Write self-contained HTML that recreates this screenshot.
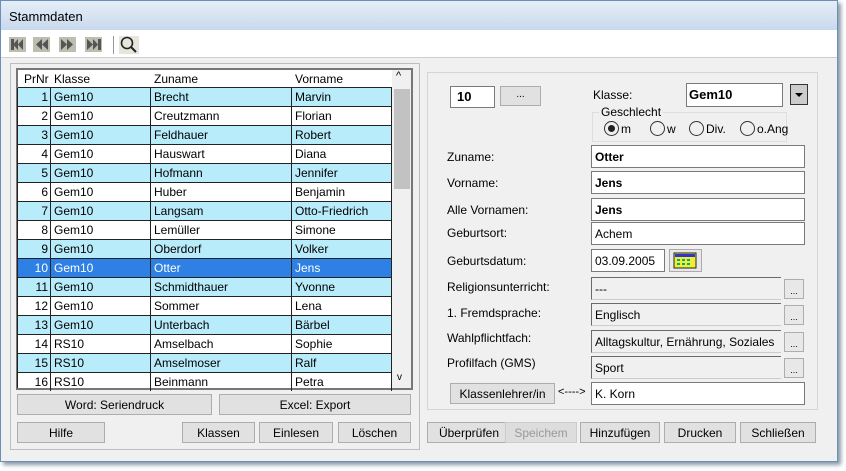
<!DOCTYPE html><html><head><meta charset="utf-8"><style>
*{box-sizing:border-box;margin:0;padding:0}
body{width:846px;height:471px;background:#fff;font-family:"Liberation Sans",sans-serif;font-size:12px;color:#000;position:relative;overflow:hidden}
.a{position:absolute}
.win{left:0;top:0;width:838px;height:462px;background:#f0f0f0;border:1px solid #6b8fb5;box-shadow:3px 3px 4px #8a9aa8}
.title{left:0;top:0;width:836px;height:29px;background:linear-gradient(#e6eef8,#c9d9ec);font-size:13px;padding:8px 0 0 8px}
.tb{left:0;top:29px;width:836px;height:28px;background:#fff;border-bottom:1px solid #cfcfcf}
.btn{position:absolute;background:#e1e1e1;border:1px solid #adadad;text-align:center;line-height:20px}
.row{position:absolute;left:17px;width:375px;height:19px;border-bottom:1px solid #222;border-left:1px solid #222}
.row div{position:absolute;top:0;height:18px;line-height:18px;border-right:1px solid #222;padding-left:3px;white-space:nowrap}
.c0{left:0;width:33px;text-align:right;padding-right:2px}
.c1{left:33px;width:100px}.c2{left:133px;width:141px}.c3{left:274px;width:100px}
.lbl{position:absolute;left:447px}
.fld{position:absolute;left:591px;width:214px;height:23px;background:#fff;border:1px solid #7a7a7a;padding:4px 3px;font-weight:bold}
.gf{position:absolute;left:591px;width:190px;height:23px;background:#f0f0f0;border:1px solid #6a6a6a;border-right:none;border-bottom-color:#ccc;padding:4px 3px}
.db{position:absolute;left:784px;width:20px;height:20px;background:#e8e8e8;border:1px solid #adadad;font-size:9px;text-align:center;line-height:22px}
.rb{display:inline-block;width:15px;height:15px;border:1px solid #333;border-radius:50%;vertical-align:-3px;margin-right:2px;position:relative}
</style></head><body>
<div class="a win">
<div class="a title">Stammdaten</div>
<div class="a tb">
<svg class="a" style="left:8px;top:6px" width="140" height="18">
<g fill="#bdbdb0"><rect x="0" y="1" width="17" height="15"/><rect x="24" y="1" width="17" height="15"/><rect x="50" y="1" width="17" height="15"/><rect x="76" y="1" width="17" height="15"/><rect x="110" y="0" width="20" height="18" fill="#e6e6dc"/></g>
<g fill="#555"><rect x="2" y="3" width="3" height="11"/><path d="M4 8.5l5-5.5v11z M9 8.5l5-5.5v11z"/>
<path d="M27 8.5l6-5.5v11z M33 8.5l6-5.5v11z"/>
<path d="M58 3l6 5.5-6 5.5z M52 3l6 5.5-6 5.5z"/>
<path d="M78 3l6 5.5-6 5.5z M84 3l5 5.5-5 5.5z"/><rect x="89" y="3" width="3" height="11"/></g>
<rect x="104" y="0" width="1" height="18" fill="#999"/>
<circle cx="118" cy="7" r="5.5" fill="none" stroke="#222" stroke-width="1.6"/><path d="M122 11l5 5" stroke="#222" stroke-width="2"/>
</svg></div>
<div class="a" style="left:9px;top:62px;width:410px;height:387px;border:1px solid #bdbdbd"></div>
</div>
<!-- grid -->
<div class="a" style="left:16px;top:68px;width:397px;height:322px;background:#fff;border:2px solid #777"></div>
<div class="a" style="left:18px;top:70px;width:374px;height:18px;background:#fff;border-bottom:1px solid #222">
<span class="a" style="left:6px;top:2px">PrNr</span><span class="a" style="left:36px;top:2px">Klasse</span><span class="a" style="left:136px;top:2px">Zuname</span><span class="a" style="left:277px;top:2px">Vorname</span></div>
<div class="a" style="left:392px;top:70px;width:19px;height:318px;background:#f0f0f0"></div>
<div class="a" style="left:396px;top:70px;font-size:11px">^</div>
<div class="a" style="left:394px;top:89px;width:16px;height:100px;background:#c2c2c2"></div>
<div class="a" style="left:397px;top:372px;font-size:10px">v</div>
<div id="g"></div>
<div class="btn" style="left:17px;top:394px;width:195px;height:21px">Word: Seriendruck</div>
<div class="btn" style="left:219px;top:394px;width:192px;height:21px">Excel: Export</div>
<div class="btn" style="left:17px;top:422px;width:88px;height:21px">Hilfe</div>
<div class="btn" style="left:182px;top:422px;width:73px;height:21px">Klassen</div>
<div class="btn" style="left:259px;top:422px;width:74px;height:21px">Einlesen</div>
<div class="btn" style="left:338px;top:422px;width:73px;height:21px">Löschen</div>
<div class="btn" style="left:427px;top:422px;width:84px;height:21px">Überprüfen</div>
<div class="btn" style="left:505px;top:422px;width:72px;height:21px;color:#999;background:#ddd;border-color:#ccc">Speichem</div>
<div class="btn" style="left:580px;top:422px;width:80px;height:21px">Hinzufügen</div>
<div class="btn" style="left:664px;top:422px;width:72px;height:21px">Drucken</div>
<div class="btn" style="left:740px;top:422px;width:76px;height:21px">Schließen</div>
<!-- right panel -->
<div class="a" style="left:427px;top:72px;width:391px;height:338px;border:1px solid #d5d5d5"></div>
<div class="a" style="left:450px;top:86px;width:45px;height:22px;background:#fff;border:1px solid #7a7a7a;font-weight:bold;font-size:13px;padding:2px 6px">10</div>
<div class="btn" style="left:500px;top:86px;width:41px;height:20px;line-height:16px;font-size:10px">...</div>
<div class="a" style="left:593px;top:88px">Klasse:</div>
<div class="a" style="left:686px;top:83px;width:97px;height:24px;background:#fff;border:1px solid #7a7a7a;font-weight:bold;font-size:13px;padding:3px 2px">Gem10</div>
<div class="a" style="left:790px;top:84px;width:18px;height:21px;background:#ccc;border:1px solid #333"><svg width="16" height="19"><path d="M4 8h8l-4 4z"/></svg></div>
<div class="a" style="left:592px;top:112px;width:195px;height:30px;border:1px solid #ddd"></div>
<div class="a" style="left:599px;top:105px;background:#f0f0f0;padding:0 2px">Geschlecht</div>
<div class="a" style="left:604px;top:121px"><span class="rb"><span class="a" style="left:3px;top:3px;width:7px;height:7px;background:#222;border-radius:50%"></span></span>m</div>
<div class="a" style="left:650px;top:121px"><span class="rb"></span>w</div>
<div class="a" style="left:689px;top:121px"><span class="rb"></span>Div.</div>
<div class="a" style="left:740px;top:121px"><span class="rb"></span>o.Ang</div>
<div class="lbl" style="top:150px">Zuname:</div><div class="fld" style="top:145px">Otter</div>
<div class="lbl" style="top:176px">Vorname:</div><div class="fld" style="top:171px">Jens</div>
<div class="lbl" style="top:203px">Alle Vornamen:</div><div class="fld" style="top:198px">Jens</div>
<div class="lbl" style="top:226px">Geburtsort:</div><div class="fld" style="top:222px;font-weight:normal">Achem</div>
<div class="lbl" style="top:254px">Geburtsdatum:</div><div class="fld" style="top:249px;width:74px;font-weight:normal">03.09.2005</div>
<div class="a" style="left:669px;top:249px;width:33px;height:23px;border:1px solid #aaa;background:#e8e8e8"><svg width="30" height="20"><rect x="4" y="3" width="22" height="15" fill="#ee3" stroke="#222"/><rect x="5" y="4" width="20" height="3" fill="#33c"/><g fill="#0a8"><rect x="7" y="9" width="3" height="2"/><rect x="12" y="9" width="3" height="2"/><rect x="17" y="9" width="3" height="2"/><rect x="7" y="13" width="3" height="2"/><rect x="12" y="13" width="3" height="2"/><rect x="17" y="13" width="3" height="2"/></g></svg></div>
<div class="lbl" style="top:280px">Religionsunterricht:</div><div class="gf" style="top:277px">---</div><div class="db" style="top:279px">...</div>
<div class="lbl" style="top:306px">1. Fremdsprache:</div><div class="gf" style="top:303px">Englisch</div><div class="db" style="top:305px">...</div>
<div class="lbl" style="top:331px">Wahlpflichtfach:</div><div class="gf" style="top:330px">Alltagskultur, Ernährung, Soziales</div><div class="db" style="top:332px">...</div>
<div class="lbl" style="top:356px">Profilfach (GMS)</div><div class="gf" style="top:356px">Sport</div><div class="db" style="top:358px">...</div>
<div class="btn" style="left:450px;top:383px;width:105px;height:21px">Klassenlehrer/in</div>
<div class="a" style="left:558px;top:386px;font-size:11px">&lt;----&gt;</div>
<div class="fld" style="top:382px;width:214px;font-weight:normal">K. Korn</div>
<script>
var d=[["Gem10","Brecht","Marvin"],["Gem10","Creutzmann","Florian"],["Gem10","Feldhauer","Robert"],["Gem10","Hauswart","Diana"],["Gem10","Hofmann","Jennifer"],["Gem10","Huber","Benjamin"],["Gem10","Langsam","Otto-Friedrich"],["Gem10","Lemüller","Simone"],["Gem10","Oberdorf","Volker"],["Gem10","Otter","Jens"],["Gem10","Schmidthauer","Yvonne"],["Gem10","Sommer","Lena"],["Gem10","Unterbach","Bärbel"],["RS10","Amselbach","Sophie"],["RS10","Amselmoser","Ralf"],["RS10","Beinmann","Petra"]];
var h="";d.forEach(function(r,i){var t=88+i*19;var bg=i==9?"#2f80e4;color:#fff":(i%2==0?"#b9ecfa":"#fff");var hh=i==15?15:19;
h+='<div class="row" style="top:'+t+'px;height:'+hh+'px;background:'+bg+(i==15?';border-bottom:none':'')+'"><div class="c0">'+(i+1)+'</div><div class="c1">'+r[0]+'</div><div class="c2">'+r[1]+'</div><div class="c3">'+r[2]+'</div></div>';});
document.getElementById("g").innerHTML=h;
</script>
</body></html>
